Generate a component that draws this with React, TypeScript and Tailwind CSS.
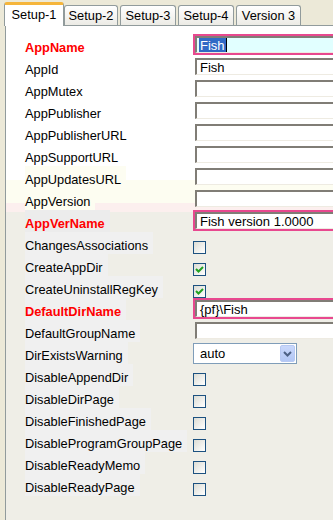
import React from 'react'

type Row = {
  label: string
  req?: boolean
  kind: 'text' | 'check' | 'combo'
  value?: string
  checked?: boolean
  focus?: boolean
}

const rows: Row[] = [
  { label: 'AppName', req: true, kind: 'text', value: 'Fish', focus: true },
  { label: 'AppId', kind: 'text', value: 'Fish' },
  { label: 'AppMutex', kind: 'text' },
  { label: 'AppPublisher', kind: 'text' },
  { label: 'AppPublisherURL', kind: 'text' },
  { label: 'AppSupportURL', kind: 'text' },
  { label: 'AppUpdatesURL', kind: 'text' },
  { label: 'AppVersion', kind: 'text' },
  { label: 'AppVerName', req: true, kind: 'text', value: 'Fish version 1.0000' },
  { label: 'ChangesAssociations', kind: 'check' },
  { label: 'CreateAppDir', kind: 'check', checked: true },
  { label: 'CreateUninstallRegKey', kind: 'check', checked: true },
  { label: 'DefaultDirName', req: true, kind: 'text', value: '{pf}\\Fish' },
  { label: 'DefaultGroupName', kind: 'text' },
  { label: 'DirExistsWarning', kind: 'combo', value: 'auto' },
  { label: 'DisableAppendDir', kind: 'check' },
  { label: 'DisableDirPage', kind: 'check' },
  { label: 'DisableFinishedPage', kind: 'check' },
  { label: 'DisableProgramGroupPage', kind: 'check' },
  { label: 'DisableReadyMemo', kind: 'check' },
  { label: 'DisableReadyPage', kind: 'check' },
]

const tabs = [
  { name: 'Setup-2', w: 'w-[54px]' },
  { name: 'Setup-3', w: 'w-[56px]' },
  { name: 'Setup-4', w: 'w-[56px]' },
  { name: 'Version 3', w: 'w-[65px]' },
]

function labelBg(i: number) {
  if (i === 6) return 'bg-[#fdfdf2]'
  if (i === 7) return 'bg-[#fdfdf1]'
  if (i === 8) return 'bg-[#ececec]'
  if (i > 8) return 'bg-[#f0f0f0]'
  return ''
}

// text field runs off the right edge of the window
function TextBox({ row }: { row: Row }) {
  return (
    <div className={`w-[220px] shrink-0 h-[21px] border-2 border-r-0 ${row.req ? 'border-[#e8488f]' : 'border-transparent'}`}>
      <div
        className={`h-[17px] border-t-2 border-l-2 border-b border-t-[#807d76] border-l-[#807d76] border-b-[#eeebe2] flex items-center pl-[2px] leading-none text-[13px] ${row.focus ? 'bg-[#e1ffff]' : 'bg-white'}`}
      >
        {row.focus ? (
          <>
            <span className="bg-[#316ac5] text-white px-px h-[14px] flex items-center">{row.value}</span>
            <span className="w-px h-[14px] bg-black" />
          </>
        ) : (
          <span className="pl-px">{row.value}</span>
        )}
      </div>
    </div>
  )
}

function Check({ checked }: { checked?: boolean }) {
  return (
    <div className="mt-[9px] w-[13px] h-[13px] border border-[#1c5180] bg-[linear-gradient(135deg,#dcdcd4,#ffffff)] flex items-center justify-center">
      {checked && (
        <svg width="9" height="9" viewBox="0 0 9 9">
          <path d="M1 4 L3.5 6.5 L8 2" fill="none" stroke="#21a121" strokeWidth="2" />
        </svg>
      )}
    </div>
  )
}

function Combo({ value }: { value?: string }) {
  return (
    <div className="mt-[1px] w-[104px] h-[21px] border border-[#7f9db9] bg-white flex items-center justify-between pl-[6px] pr-px text-[13px]">
      <span>{value}</span>
      <div className="w-[15px] h-[17px] rounded-[2px] bg-[linear-gradient(to_bottom,#c9d8fc,#b3c7f4)] border border-[#b7c9f3] flex items-center justify-center">
        <svg width="9" height="6" viewBox="0 0 9 6">
          <path d="M1 1 L4.5 4.5 L8 1" fill="none" stroke="#4d6185" strokeWidth="2" />
        </svg>
      </div>
    </div>
  )
}

export default function App() {
  return (
    <div className="w-[333px] h-[520px] overflow-hidden bg-[#ece9d8] text-black text-[12.8px] font-['Liberation_Sans',Arial,sans-serif]">
      <div className="h-[25px] flex items-end pl-[4px] gap-[2px]">
        <div className="relative z-10 mb-[-1px] w-[60px] h-[24px] bg-white border-x border-[#919b9c] border-t-[3px] border-t-[#f5b53b] rounded-t-[3px] flex items-center justify-center pb-[2px]">
          Setup-1
        </div>
        <div className="flex items-end gap-[2px] -ml-[2px]">
          {tabs.map((t) => (
            <div
              key={t.name}
              className={`${t.w} h-[20px] border border-b-0 border-[#919b9c] rounded-t-[3px] bg-[linear-gradient(to_bottom,#ffffff,#ecebe5)] flex items-center justify-center`}
            >
              {t.name}
            </div>
          ))}
        </div>
      </div>
      <div className="ml-[5px] h-[495px] border-l border-t border-[#919b9c] bg-[linear-gradient(to_bottom,#ffffff_0px,#ffffff_154px,#fdfdf1_154px,#fdfdf1_177px,#fcefee_177px,#fcefee_186px,#efeee7_186px,#efeee7_100%)] pt-[8px]">
        {rows.map((r, i) => (
          <div key={r.label} className="flex h-[22px]">
            <div className="w-[187px] pl-[19px] shrink-0">
              <div
                className={`inline-block h-[22px] pt-[7px] leading-[14px] pr-[5px] whitespace-nowrap ${labelBg(i)} ${r.req ? 'text-[#ff0000] font-bold' : ''}`}
              >
                {r.label}
              </div>
            </div>
            {r.kind === 'text' && <TextBox row={r} />}
            {r.kind === 'check' && <Check checked={r.checked} />}
            {r.kind === 'combo' && <Combo value={r.value} />}
          </div>
        ))}
      </div>
    </div>
  )
}
